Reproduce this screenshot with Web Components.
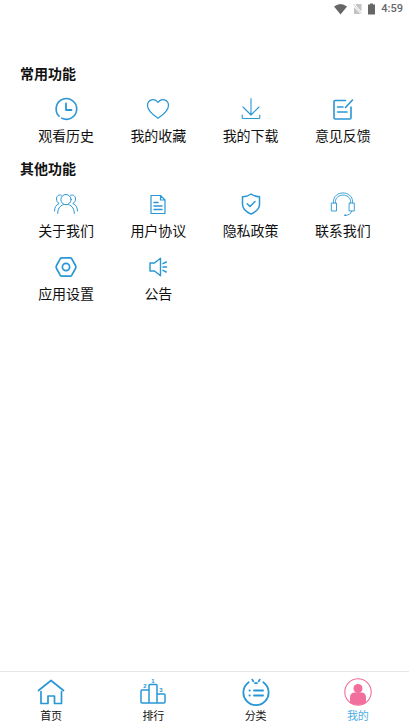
<!DOCTYPE html>
<html lang="zh-CN">
<head>
<meta charset="utf-8">
<meta name="viewport" content="width=device-width, initial-scale=1">
<title>我的</title>
<style>
  html, body { margin: 0; background: #fff; }
  body { font-family: "Noto Sans CJK SC", sans-serif; color: #111; }
</style>
</head>
<body>
<profile-page></profile-page>
<script>
const ICONS = {
  history: '<path d="M5.1 19.2A10.3 10.3 0 1 1 7.7 21.1M3.8 17.8 2.9 16.3" stroke-width="1.6"/><path d="M12 6.5V13H17.5" stroke-width="1.8"/>',
  heart: '<path d="M12 21.2C9.2 19.3 1.5 14 1.5 8.4C1.5 2.4 8.8.5 12 5.5C15.2.5 22.5 2.4 22.5 8.4C22.5 14 14.8 19.3 12 21.2Z" stroke-width="1.2"/>',
  download: '<path d="M12 1.5V17.5M4 10 12 18 20 10M3.2 18V20.5Q3.2 21.5 4.2 21.5H19.8Q20.8 21.5 20.8 20.5V18" stroke-width="1.1"/>',
  edit: '<path d="M14.5 3.5H4.2Q3 3.5 3 4.7V20.8Q3 22 4.2 22H18.8Q20 22 20 20.8V10M6.5 10H12M6.5 15H16M14.5 10.5 21.5 3" stroke-width="1.6"/>',
  people: '<circle cx="12" cy="7.6" r="5.1"/><path d="M3.7 21.5C3.7 17 5.5 14 9.4 12.6M20.3 21.5C20.3 17 18.5 14 14.6 12.6M7.4 3.2C4.4 2.3 2.5 4.2 2.5 7C2.5 9.2 3.8 10.7 5.2 11.5C2 12.7.5 15.5.5 19M16.6 3.2C19.6 2.3 21.5 4.2 21.5 7C21.5 9.2 20.2 10.7 18.8 11.5C22 12.7 23.5 15.5 23.5 19"/>',
  document: '<path d="M5 3.5H14.5L19 8V21.500H5ZM14.5 3.5V8H19" stroke-width="1.2"/><path d="M8 10.500H12M8 14H16M8 17.500H16" stroke-width="1.4"/>',
  shield: '<path d="M12 2Q15.5 4.6 20.5 4.8V12.5C20.5 17 16.5 20 12 22.2C7.5 20 3.5 17 3.5 12.5V4.8Q8.5 4.6 12 2Z" stroke-width="1.5"/><path d="M8.2 11.8 11 14.5 16 9.5" stroke-width="1.5"/>',
  headset: '<path d="M2.4 11V9.8C2.4-2 21.6-2 21.6 9.8V11M4.4 11V9.8C4.4.9 19.6.9 19.6 9.8V11M.7 11H5.5V19H.7ZM18.5 11H23.3V19H18.5ZM20.8 19C20 22 17.500 23.200 14.500 23.400" stroke-width=".9"/><circle cx="14" cy="23.2" r=".5"/>',
  settings: '<path d="M8 2.8H16Q17.2 2.8 17.8 3.8L21.5 10.5Q22.3 12 21.5 13.5L17.8 20.2Q17.2 21.2 16 21.2H8Q6.800 21.200 6.200 20.200L2.500 13.500Q1.700 12 2.500 10.500L6.200 3.800Q6.800 2.800 8 2.800Z" stroke-width="1.700"/><circle cx="12" cy="12" r="3.600" stroke-width="1.700"/>',
  speaker: '<path d="M4 8H8.5L14.5 3.2V20.8L8.5 16H4Z" stroke-width="1.4"/><path d="M17 12H20.5M17 8.6 20.2 7M17 15.4 20.2 17" stroke-width="1.6"/>',
  home: '<path d="M1.5 12.500 14 2.500 26.500 12.500" stroke-width="1.700"/><path d="M4 13.500V25.500H11V18H17.500V25.500H24.500V13.500" stroke-width="1.700"/>',
  rank: '<path d="M10 25V7.5Q10 6.5 11 6.5H17Q18 6.500 18 7.500V25M10 12H3Q2 12 2 13V24Q2 25 3 25H25Q26 25 26 24V17Q26 16 25 16H18" stroke-width="1.500"/><g fill="currentColor" stroke="none" font-family="Liberation Sans, sans-serif" font-size="6" font-weight="700" text-anchor="middle"><text x="14" y="5">1</text><text x="6" y="10">2</text><text x="22" y="14">3</text></g>',
  category: '<path d="M6.700 4.300A12.600 12.600 0 1 0 21.300 4.300" stroke-width="1.800"/><path d="M10.300 1.600 11.300 3.400M13 5.200H15M17.700 1.600 16.700 3.400" stroke-width="1.800"/><path d="M12 12.500H21M12 17.500H21M7.500 12.500H7.800M7.500 17.500H7.800" stroke-width="1.900"/>',
  profile: '<circle cx="14" cy="14" r="13.2" stroke-width="1.1"/><circle cx="14" cy="10.500" r="4.500" fill="currentColor" stroke="none"/><path d="M6 25V20Q6 14.500 10.500 14.500H17.500Q22 14.500 22 20V25Q14 29 6 25Z" fill="currentColor" stroke="none"/>',
  wifi: '<path d="M0 3.5Q6.500-1.500 13 3.500L6.500 11.500Z" fill="currentColor" stroke="none"/>',
  sim: '<path d="M3.500 1H8.500V8.500L2.500 2ZM1 4 7.500 11H1Z" fill="currentColor" stroke="none"/><path d="M.5 1.500 8.500 10.500" stroke-width=".8"/>',
  battery: '<path d="M2 .5H5V1.500H7V11.500H0V1.500H2Z" fill="currentColor" stroke="none"/>'
};

function define(name, html, fill) {
  const template = document.createElement('template');
  template.innerHTML = html;
  customElements.define(name, class extends HTMLElement {
    connectedCallback() {
      if (this.shadowRoot) return;
      const root = this.attachShadow({ mode: 'open' });
      root.append(template.content.cloneNode(true));
      if (fill) fill(this, root);
    }
  });
}

define('line-icon', `
  <style>
    :host { display: block; flex: none; color: #2997d5; }
    svg { display: block; overflow: visible; }
  </style>
  <svg fill="none" stroke="currentColor" stroke-linecap="round" stroke-linejoin="round" aria-hidden="true"></svg>`,
  (host, root) => {
    const svg = root.querySelector('svg');
    const [w, h] = (host.getAttribute('size') || '24 24').split(' ');
    svg.setAttribute('width', w);
    svg.setAttribute('height', h);
    svg.setAttribute('viewBox', `0 0 ${w} ${h}`);
    svg.innerHTML = ICONS[host.getAttribute('name')] || '';
  });

define('status-bar', `
  <style>
    :host { display: flex; align-items: center; justify-content: flex-end; gap: 6px;
      padding: 0 6px; font: 500 11px/18px Roboto, sans-serif; color: #666; }
    line-icon { color: #666; }
    .off { color: #c4c4c4; }
  </style>
  <line-icon name="wifi" size="13 12"></line-icon>
  <line-icon class="off" name="sim" size="9 12"></line-icon>
  <line-icon name="battery" size="7 12"></line-icon>
  <time>4:59</time>`);

define('feature-section', `
  <style>
    :host { display: block; }
    h2 { margin: 0 0 14px; font-size: 14px; line-height: 20px; font-weight: 700; color: #111; }
    .grid { display: grid; grid-template-columns: repeat(4, 1fr); row-gap: 15px; }
  </style>
  <h2></h2><div class="grid"><slot></slot></div>`,
  (host, root) => { root.querySelector('h2').textContent = host.getAttribute('heading'); });

define('feature-item', `
  <style>
    :host { display: block; }
    button { display: flex; flex-direction: column; align-items: center; gap: 4px; width: 100%;
      margin: 0; padding: 0; border: 0; background: none; font: inherit; font-size: 14px;
      line-height: 20px; color: #111; white-space: nowrap; cursor: pointer; }
  </style>
  <button type="button"><line-icon></line-icon><span><slot></slot></span></button>`,
  (host, root) => setIcon(host, root));

define('tab-item', `
  <style>
    :host { display: block; flex: 1; }
    a { display: flex; flex-direction: column; align-items: center; gap: 1px;
      font-size: 11px; line-height: 16px; color: #111; text-decoration: none; }
    :host([active]) a { color: #4eaee3; }
    :host([active]) line-icon { color: #f26e9c; }
  </style>
  <a href="#"><line-icon size="28 28"></line-icon><span><slot></slot></span></a>`,
  (host, root) => {
    if (host.hasAttribute('active')) root.querySelector('a').setAttribute('aria-current', 'page');
    setIcon(host, root);
  });

/* Passes the host's icon name on and draws that icon. */
function setIcon(host, root) {
  const icon = root.querySelector('line-icon');
  icon.setAttribute('name', host.getAttribute('icon'));
  if (icon.shadowRoot) icon.shadowRoot.querySelector('svg').innerHTML = ICONS[icon.getAttribute('name')];
}

define('tab-bar', `
  <style>
    :host { display: block; position: sticky; bottom: 0; background: #fff; border-top: 1px solid #e6e6e6; }
    nav { display: flex; padding: 6px 0 5px; }
  </style>
  <nav><slot></slot></nav>`);

define('profile-page', `
  <style>
    :host { display: flex; flex-direction: column; min-height: 100vh; }
    main { flex: 1; display: flex; flex-direction: column; gap: 13px; padding: 45px 20px 20px; }
  </style>
  <status-bar></status-bar>
  <main>
    <feature-section heading="常用功能">
      <feature-item icon="history">观看历史</feature-item>
      <feature-item icon="heart">我的收藏</feature-item>
      <feature-item icon="download">我的下载</feature-item>
      <feature-item icon="edit">意见反馈</feature-item>
    </feature-section>
    <feature-section heading="其他功能">
      <feature-item icon="people">关于我们</feature-item>
      <feature-item icon="document">用户协议</feature-item>
      <feature-item icon="shield">隐私政策</feature-item>
      <feature-item icon="headset">联系我们</feature-item>
      <feature-item icon="settings">应用设置</feature-item>
      <feature-item icon="speaker">公告</feature-item>
    </feature-section>
  </main>
  <tab-bar>
    <tab-item icon="home">首页</tab-item>
    <tab-item icon="rank">排行</tab-item>
    <tab-item icon="category">分类</tab-item>
    <tab-item icon="profile" active>我的</tab-item>
  </tab-bar>`);
</script>
</body>
</html>
